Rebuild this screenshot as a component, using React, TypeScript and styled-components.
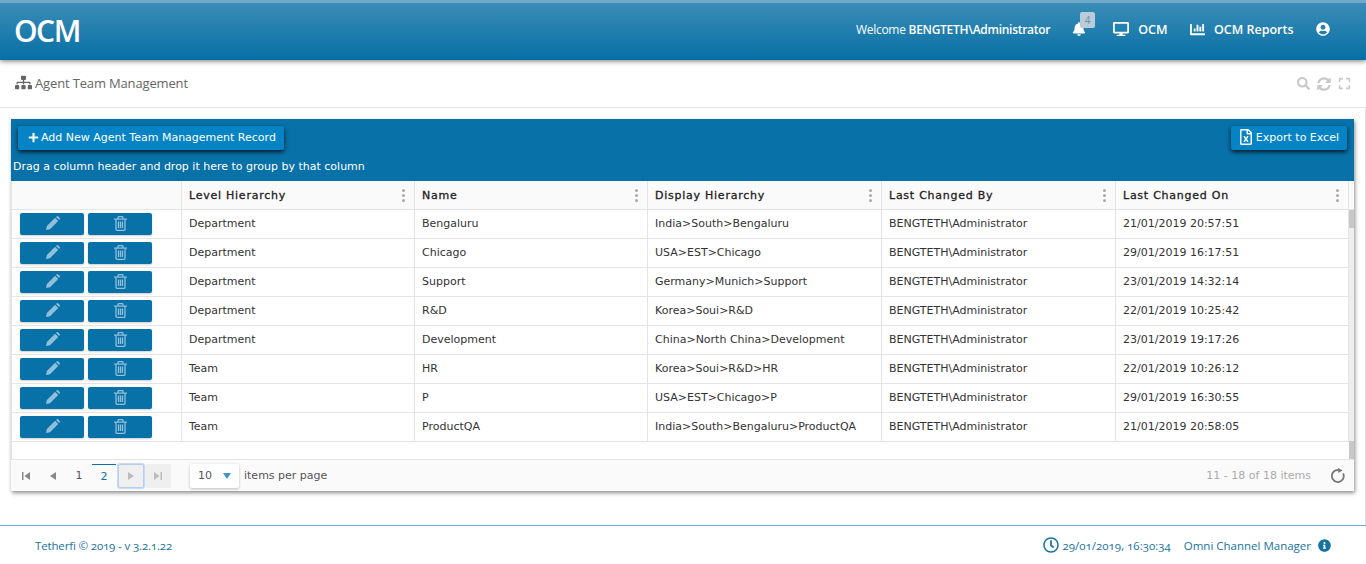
import styled, { createGlobalStyle } from "styled-components";
import {
  FaBell,
  FaChartBar,
  FaDesktop,
  FaExpand,
  FaInfoCircle,
  FaPlus,
  FaRegClock,
  FaRegFileExcel,
  FaSearch,
  FaSitemap,
  FaSyncAlt,
  FaUserCircle,
} from "react-icons/fa";

const rows = [
  ["Department", "Bengaluru", "India>South>Bengaluru", "21/01/2019 20:57:51"],
  ["Department", "Chicago", "USA>EST>Chicago", "29/01/2019 16:17:51"],
  ["Department", "Support", "Germany>Munich>Support", "23/01/2019 14:32:14"],
  ["Department", "R&D", "Korea>Soui>R&D", "22/01/2019 10:25:42"],
  ["Department", "Development", "China>North China>Development", "23/01/2019 19:17:26"],
  ["Team", "HR", "Korea>Soui>R&D>HR", "22/01/2019 10:26:12"],
  ["Team", "P", "USA>EST>Chicago>P", "29/01/2019 16:30:55"],
  ["Team", "ProductQA", "India>South>Bengaluru>ProductQA", "21/01/2019 20:58:05"],
];

const headers = ["Level Hierarchy", "Name", "Display Hierarchy", "Last Changed By", "Last Changed On"];
const columns = "170px 233px 233px 234px 234px 233px";

const PencilIcon = () => (
  <svg width="15" height="15" viewBox="0 0 16 16" fill="currentColor">
    <path d="M1 15l1-4.300L10.800 1.900l3.300 3.300L5.300 14z" />
    <path d="M11.700 1l.5-.5a1.500 1.500 0 0 1 2 0l1.300 1.300a1.500 1.500 0 0 1 0 2l-.5.5z" />
  </svg>
);

const TrashIcon = () => (
  <svg width="13" height="15" viewBox="0 0 13 15" fill="none" stroke="currentColor" strokeWidth="1.300">
    <path d="M0 3.200h13M4 3.200V1.600a1 1 0 0 1 1-1h3a1 1 0 0 1 1 1v1.600" />
    <path d="M2 3.200v10a1.200 1.200 0 0 0 1.200 1.200h6.600a1.200 1.200 0 0 0 1.200-1.200v-10" />
    <path d="M4.500 5.500v6.500M6.500 5.500v6.500M8.500 5.500v6.500" />
  </svg>
);

const App = () => (
  <Page>
    <GlobalStyle />
    <Header>
      <Logo>OCM</Logo>
      <Nav>
        <Welcome>
          Welcome <strong>BENGTETH\Administrator</strong>
        </Welcome>
        <BellWrap>
          <FaBell size={14} />
          <Badge>4</Badge>
        </BellWrap>
        <NavLink>
          <FaDesktop size={16} />
          OCM
        </NavLink>
        <NavLink>
          <FaChartBar size={15} />
          OCM Reports
        </NavLink>
        <FaUserCircle size={14} />
      </Nav>
    </Header>

    <TitleBar>
      <Title>
        <FaSitemap size={17} color="#666" />
        Agent Team Management
      </Title>
      <TitleTools>
        <FaSearch size={13} />
        <FaSyncAlt size={14} />
        <FaExpand size={13} />
      </TitleTools>
    </TitleBar>

    <Content>
      <Grid>
        <Toolbar>
          <ToolRow>
            <ToolButton>
              <FaPlus size={11} />
              Add New Agent Team Management Record
            </ToolButton>
            <ToolButton $narrow>
              <FaRegFileExcel size={16} />
              Export to Excel
            </ToolButton>
          </ToolRow>
          <GroupHint>Drag a column header and drop it here to group by that column</GroupHint>
        </Toolbar>

        <TableArea>
          <HeadRow>
            <HeadCell />
            {headers.map((label) => (
              <HeadCell key={label}>
                {label}
                <ColumnMenu>
                  <i />
                  <i />
                  <i />
                </ColumnMenu>
              </HeadCell>
            ))}
          </HeadRow>
          {rows.map((row) => (
            <Row key={row[1]}>
              <ActionCell>
                <ActionButton>
                  <PencilIcon />
                </ActionButton>
                <ActionButton>
                  <TrashIcon />
                </ActionButton>
              </ActionCell>
              <Cell>{row[0]}</Cell>
              <Cell>{row[1]}</Cell>
              <Cell>{row[2]}</Cell>
              <Cell>BENGTETH\Administrator</Cell>
              <Cell>{row[3]}</Cell>
            </Row>
          ))}
          <ScrollTrack>
            <ScrollThumb />
            <ScrollThumb />
          </ScrollTrack>
        </TableArea>

        <Pager>
          <PagerLeft>
            <PageIcon>
              <Glyph viewBox="0 0 10 10">
                <path d="M1 1h1.500v8H1zM9 1v8L3.500 5z" />
              </Glyph>
            </PageIcon>
            <PageIcon>
              <Glyph viewBox="0 0 10 10">
                <path d="M8 1v8L2 5z" />
              </Glyph>
            </PageIcon>
            <PageNumber>1</PageNumber>
            <PageNumber $active>2</PageNumber>
            <PageIcon $focused>
              <Glyph viewBox="0 0 10 10">
                <path d="M2 1v8l6-4z" />
              </Glyph>
            </PageIcon>
            <PageIcon $disabled>
              <Glyph viewBox="0 0 10 10">
                <path d="M1 1v8l5.500-4zM7.500 1H9v8H7.500z" />
              </Glyph>
            </PageIcon>
            <PageSize>
              10
              <Caret />
            </PageSize>
            <PerPage>items per page</PerPage>
          </PagerLeft>
          <PagerRight>
            <span>11 - 18 of 18 items</span>
            <RefreshIcon viewBox="0 0 16 16">
              <path d="M13.200 5.400A6 6 0 1 1 8.800 2.100" fill="none" stroke="#777" strokeWidth="1.800" />
              <path d="M8.200 0l4.400 2.400-4.400 2.600z" fill="#777" />
            </RefreshIcon>
          </PagerRight>
        </Pager>
      </Grid>
    </Content>

    <Footer>
      <Copyright>Tetherfi © 2019 - v 3.2.1.22</Copyright>
      <FooterRight>
        <FaRegClock size={16} />
        <FooterDate>29/01/2019, 16:30:34</FooterDate>
        <span>Omni Channel Manager</span>
        <FaInfoCircle size={13} />
      </FooterRight>
    </Footer>
  </Page>
);

const GlobalStyle = createGlobalStyle`
  html, body {
    margin: 0;
    background: #fff;
  }
`;

const Page = styled.div`
  width: 1366px;
  height: 564px;
  overflow: hidden;
  display: flex;
  flex-direction: column;
  font-family: "Open Sans", sans-serif;
`;

const Header = styled.header`
  height: 60px;
  flex: none;
  box-sizing: border-box;
  border-top: 3px solid #72a9c8;
  background: linear-gradient(#3a8db6, #076fa5);
  box-shadow: 0 1px 5px rgba(0, 0, 0, 0.55);
  display: flex;
  align-items: center;
  justify-content: space-between;
  padding: 0 36px 0 14px;
  color: #fff;
  position: relative;
`;

const Logo = styled.div`
  font-size: 30px;
  font-weight: 600;
  letter-spacing: -1.500px;
  margin-top: -3px;
`;

const Nav = styled.nav`
  display: flex;
  align-items: center;
  font-size: 12.500px;
  margin-top: -5px;
`;

const Welcome = styled.span`
  font-size: 12px;
  letter-spacing: -0.280px;
  margin-right: 22px;

  strong {
    font-weight: 600;
  }
`;

const BellWrap = styled.span`
  position: relative;
  display: flex;
  margin-right: 27px;
`;

const Badge = styled.span`
  position: absolute;
  top: -10px;
  left: 8px;
  width: 15px;
  height: 16px;
  background: #b8cdd9;
  color: #6f8ea0;
  border-radius: 2px;
  font-size: 10px;
  line-height: 16px;
  text-align: center;
`;

const NavLink = styled.span`
  display: flex;
  align-items: center;
  gap: 9px;
  font-weight: 600;
  margin-right: 22.500px;
`;

const TitleBar = styled.div`
  height: 48px;
  flex: none;
  box-sizing: border-box;
  border-bottom: 1px solid #e6e6e6;
  display: flex;
  align-items: center;
  justify-content: space-between;
  padding: 0 15px;
`;

const Title = styled.h1`
  margin: 0 0 2px;
  display: flex;
  align-items: center;
  gap: 3px;
  font-size: 13px;
  font-weight: 400;
  letter-spacing: -0.150px;
  color: #666;
`;

const TitleTools = styled.div`
  display: flex;
  align-items: center;
  gap: 7px;
  color: #c8c8c8;
`;

const Content = styled.main`
  height: 417px;
  flex: none;
  box-sizing: border-box;
  padding: 11px 0 0 11px;
  border-right: 1px solid #e0e0e0;
`;

const Grid = styled.section`
  width: 1343px;
  height: 372px;
  display: flex;
  flex-direction: column;
  background: #fff;
  box-shadow: 1px 2px 4px rgba(0, 0, 0, 0.45);
`;

const Toolbar = styled.div`
  height: 62px;
  flex: none;
  background: #0871a8;
  padding: 0 7px 0 2px;
  color: #fff;
`;

const ToolRow = styled.div`
  display: flex;
  justify-content: space-between;
  padding: 7px 0 0 5px;
`;

const ToolButton = styled.button<{ $narrow?: boolean }>`
  height: 24px;
  display: flex;
  align-items: center;
  gap: 2px;
  padding: 0 8px 2px ${({ $narrow }) => ($narrow ? "7px" : "10px")};
  border: 0;
  border-radius: 2px;
  background: #0583c5;
  color: #fff;
  font-family: "DejaVu Sans", sans-serif;
  font-size: 11px;
  box-shadow: 0 2px 4px rgba(0, 0, 0, 0.8);
`;

const GroupHint = styled.div`
  margin-top: 10px;
  font-family: "DejaVu Sans", sans-serif;
  font-size: 11px;
  line-height: 14px;
`;

const TableArea = styled.div`
  height: 279px;
  flex: none;
  position: relative;
  border-left: 1px solid #e4e4e4;
  border-bottom: 1px solid #e4e4e4;
  box-sizing: border-box;
  overflow: hidden;
`;

const HeadRow = styled.div`
  display: grid;
  grid-template-columns: ${columns};
  height: 29px;
  background: #fafafa;
  border-bottom: 1px solid #e4e4e4;
  box-sizing: border-box;
`;

const HeadCell = styled.div`
  display: flex;
  align-items: center;
  justify-content: space-between;
  padding: 0 9px 0 7px;
  border-right: 1px solid #e4e4e4;
  font-family: "DejaVu Sans", sans-serif;
  font-size: 11px;
  font-weight: 400;
  letter-spacing: 0.750px;
  color: #222;
  -webkit-text-stroke: 0.300px #222;
`;

const ColumnMenu = styled.span`
  display: flex;
  flex-direction: column;
  gap: 2px;

  i {
    width: 3px;
    height: 3px;
    border-radius: 50%;
    background: #aaa;
  }
`;

const Row = styled.div`
  display: grid;
  grid-template-columns: ${columns};
  height: 29px;
  box-sizing: border-box;
  border-bottom: 1px solid #e4e4e4;
`;

const Cell = styled.div`
  display: flex;
  align-items: center;
  padding: 0 6px 2px 7px;
  border-right: 1px solid #e4e4e4;
  font-family: "DejaVu Sans", sans-serif;
  font-size: 11px;
  color: #333;
  white-space: nowrap;
`;

const ActionCell = styled.div`
  display: flex;
  align-items: center;
  gap: 4px;
  padding: 0 0 1px 8px;
  border-right: 1px solid #e4e4e4;
`;

const ActionButton = styled.button`
  width: 64px;
  height: 22px;
  display: flex;
  align-items: center;
  justify-content: center;
  padding: 0;
  border: 0;
  border-radius: 2px;
  background: #0871a8;
  color: #8fbfd9;
  box-shadow: 0 1px 2px rgba(0, 0, 0, 0.2);
`;

const ScrollTrack = styled.div`
  position: absolute;
  top: 29px;
  right: 0;
  bottom: 0;
  width: 5px;
  display: flex;
  flex-direction: column;
  justify-content: space-between;
  background: #eeeeee;
`;

const ScrollThumb = styled.div`
  height: 18px;
  background: #c8c8c8;
`;

const Pager = styled.div`
  flex: 1;
  display: flex;
  align-items: center;
  justify-content: space-between;
  padding: 0 8px 0 2px;
  background: #fafafa;
  font-family: "DejaVu Sans", sans-serif;
  font-size: 11px;
  color: #555;
`;

const PagerLeft = styled.div`
  display: flex;
  align-items: center;
`;

const PageIcon = styled.span<{ $focused?: boolean; $disabled?: boolean }>`
  width: 26px;
  height: 24px;
  margin: 0 1px 0 ${({ $focused }) => ($focused ? "1px" : "0")};
  box-sizing: border-box;
  display: flex;
  align-items: center;
  justify-content: center;
  color: ${({ $focused, $disabled }) => ($focused || $disabled ? "#bbb" : "#888")};
  background: ${({ $focused, $disabled }) => ($focused || $disabled ? "#efefef" : "transparent")};
  border-radius: 2px;
  border: ${({ $focused }) => ($focused ? "1px solid #b5cff0" : "0")};
  box-shadow: ${({ $focused }) => ($focused ? "0 0 0 1px #c9dcf5" : "none")};
`;

const Glyph = styled.svg`
  width: 10px;
  height: 10px;
  fill: currentColor;
`;

const PageNumber = styled.span<{ $active?: boolean }>`
  width: 24px;
  height: 24px;
  box-sizing: border-box;
  display: flex;
  align-items: center;
  justify-content: center;
  margin-right: 1px;
  color: ${({ $active }) => ($active ? "#0871a8" : "#555")};
  border-top: ${({ $active }) => ($active ? "1px solid #0871a8" : "0")};
`;

const PageSize = styled.div`
  width: 49px;
  height: 24px;
  margin-left: 18px;
  box-sizing: border-box;
  padding: 0 8px;
  display: flex;
  align-items: center;
  justify-content: space-between;
  background: #fff;
  border-radius: 2px;
  box-shadow: 0 1px 3px rgba(0, 0, 0, 0.25);
`;

const Caret = styled.span`
  width: 0;
  height: 0;
  border-left: 4px solid transparent;
  border-right: 4px solid transparent;
  border-top: 6px solid #3f94c4;
`;

const PerPage = styled.span`
  margin-left: 5px;
`;

const PagerRight = styled.div`
  display: flex;
  align-items: center;
  gap: 19px;
  color: #aaa;
`;

const RefreshIcon = styled.svg`
  width: 16px;
  height: 16px;
`;

const Footer = styled.footer`
  flex: 1;
  box-sizing: border-box;
  border-top: 1px solid #72a9c8;
  padding: 0 35px;
  display: flex;
  align-items: center;
  justify-content: space-between;
  font-size: 11.500px;
  font-variant-numeric: oldstyle-nums;
  color: #17739f;
`;

const Copyright = styled.span`
  letter-spacing: -0.150px;
`;

const FooterRight = styled.div`
  display: flex;
  align-items: center;
  gap: 4px;

  > span {
    margin-right: 3px;
  }
`;

const FooterDate = styled.span`
  margin-right: 9px !important;
`;

export default App;
